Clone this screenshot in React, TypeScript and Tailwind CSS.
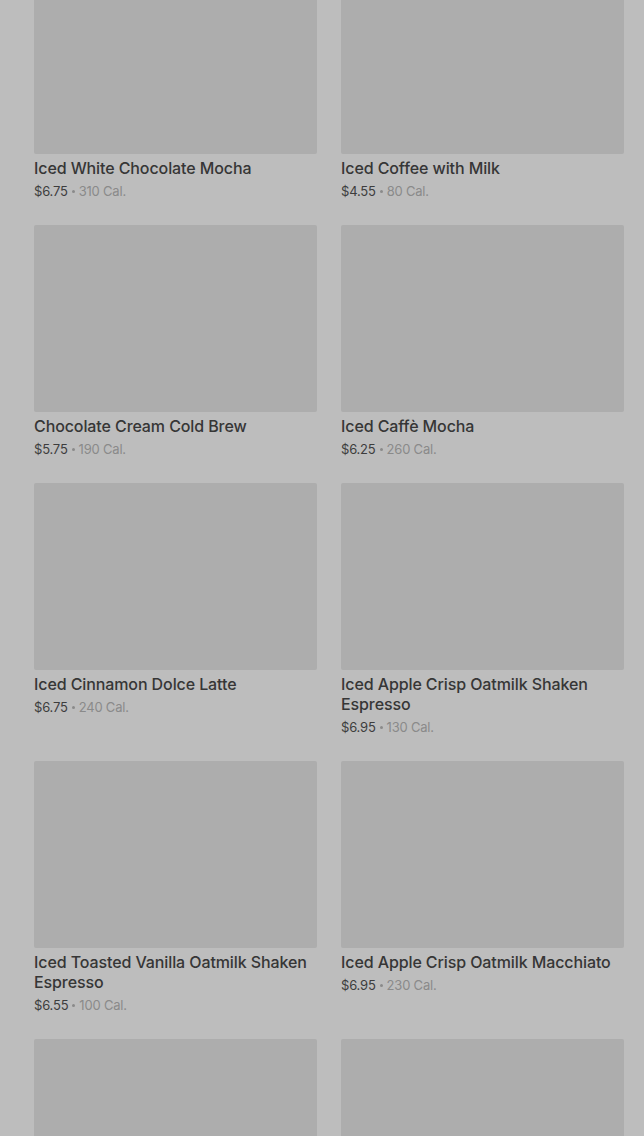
import React from "react";

const items = [
  { name: "Iced White Chocolate Mocha", price: "$6.75", cal: "310 Cal." },
  { name: "Iced Coffee with Milk", price: "$4.55", cal: "80 Cal." },
  { name: "Chocolate Cream Cold Brew", price: "$5.75", cal: "190 Cal." },
  { name: "Iced Caffè Mocha", price: "$6.25", cal: "260 Cal." },
  { name: "Iced Cinnamon Dolce Latte", price: "$6.75", cal: "240 Cal." },
  { name: "Iced Apple Crisp Oatmilk Shaken Espresso", price: "$6.95", cal: "130 Cal." },
  { name: "Iced Toasted Vanilla Oatmilk Shaken Espresso", price: "$6.55", cal: "100 Cal." },
  { name: "Iced Apple Crisp Oatmilk Macchiato", price: "$6.95", cal: "230 Cal." },
];

export default function App() {
  return (
    <div
      className="h-[1136px] w-[644px] overflow-hidden bg-[#bdbdbd]"
      style={{ fontFamily: "Inter, 'Noto Sans', sans-serif" }}
    >
      <div className="mt-[-33px] grid grid-cols-2 gap-x-6 gap-y-[25px] pl-[34px] pr-[20px]">
        {items.map((it) => (
          <div key={it.name} className="flex flex-col">
            <div className="h-[187px] rounded-[2px] bg-[#adadad]" />
            <div className="mt-1 text-[16px] font-medium leading-[20px] tracking-[-0.1px] text-[#363636]">
              {it.name}
            </div>
            <div className="mt-1 flex h-[18px] items-center text-[13px] leading-[18px] tracking-[-0.2px] text-[#3d3d3d]">
              <span>{it.price}</span>
              <span className="mx-[4px] h-[3px] w-[3px] rounded-full bg-[#8a8a8a]" />
              <span className="text-[#8a8a8a]">{it.cal}</span>
            </div>
          </div>
        ))}
        <div className="h-[187px] rounded-[2px] bg-[#adadad]" />
        <div className="h-[187px] rounded-[2px] bg-[#adadad]" />
      </div>
    </div>
  );
}
